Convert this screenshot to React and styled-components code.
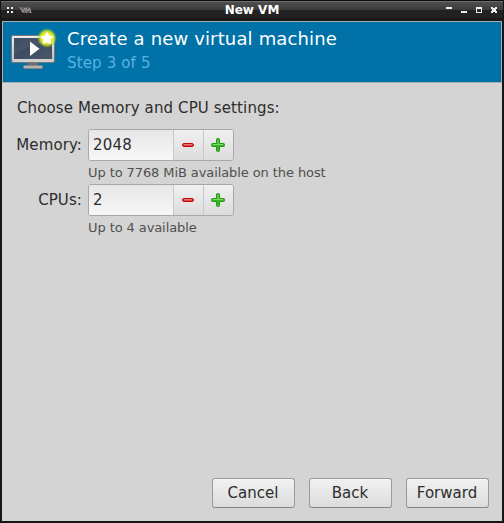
import React from "react";
import styled, { createGlobalStyle } from "styled-components";

const Global = createGlobalStyle`
  * { box-sizing: border-box; }
  body { margin: 0; background: #171516; }
`;

const Window = styled.div`
  width: 504px;
  height: 523px;
  display: flex;
  flex-direction: column;
  padding: 0 2px 2px;
  background: #171516;
  font-family: "DejaVu Sans", sans-serif;
  color: #2d2d2d;
  white-space: nowrap;
`;

const TitleBar = styled.header`
  height: 21px;
  flex: none;
  margin: 0 -2px;
  padding: 0 6px 0 6px;
  display: grid;
  grid-template-columns: 60px 1fr 60px;
  align-items: start;
  background: linear-gradient(
    to bottom,
    #0c0c0c 0 1px, #6d6b6d 1px 2px, #504f50 2px, #3c3c3c 10px,
    #222 10px 18px, #191819 18px 21px
  );
  border-left: 1px solid #171516;
  border-right: 1px solid #171516;
`;

const TitleIcon = styled.svg`
  display: block;
  height: 20px;
  width: ${(p) => p.$width}px;
  justify-self: ${(p) => p.$side};
`;

const Title = styled.h1`
  margin: 0;
  padding-top: 2px;
  text-align: center;
  font-size: 12px;
  line-height: 16px;
  font-weight: bold;
  color: #fff;
`;

const Banner = styled.section`
  height: 62px;
  flex: none;
  display: flex;
  background: #0072a8;
  border: 1px solid #a9adaf;
  padding: 5px 7px 7px 6px;
`;

const MachineIcon = styled.svg`
  width: 48px;
  height: 48px;
  flex: none;
`;

const BannerText = styled.div`
  margin-left: 10px;
`;

const Heading = styled.h2`
  margin: 0;
  font-size: 18px;
  line-height: 24px;
  font-weight: normal;
  letter-spacing: 0.15px;
  color: #fff;
`;

const Step = styled.p`
  margin: 0;
  font-size: 15px;
  line-height: 24px;
  letter-spacing: 0.15px;
  color: #59b2e0;
`;

const Body = styled.main`
  flex: 1;
  display: flex;
  flex-direction: column;
  background: #d4d4d4;
  padding: 15px 13px 13px 15px;
`;

const Intro = styled.p`
  margin: 0;
  font-size: 15px;
  line-height: 20px;
  letter-spacing: 0.12px;
`;

const Form = styled.div`
  display: grid;
  grid-template-columns: 65px max-content;
  grid-template-rows: 32px 23px 32px 23px;
  column-gap: 6px;
  margin-top: 11px;
`;

const Label = styled.label`
  justify-self: end;
  font-size: 15px;
  line-height: 32px;
  letter-spacing: 0.1px;
`;

const Hint = styled.p`
  grid-column: 2;
  margin: 0;
  font-size: 13px;
  line-height: 23px;
  letter-spacing: -0.09px;
  color: #505050;
`;

const Spin = styled.div`
  width: 146px;
  height: 32px;
  display: grid;
  grid-template-columns: 1fr 30px 30px;
  border: 1px solid #a8a8a8;
  border-radius: 3px;
  overflow: hidden;
`;

const Value = styled.span`
  padding-left: 4px;
  font-size: 15px;
  line-height: 30px;
  letter-spacing: 0.2px;
  background: linear-gradient(#e6e6e6, #f7f7f7);
`;

const StepButton = styled.button`
  display: flex;
  align-items: center;
  justify-content: center;
  padding: 0;
  border: 0;
  border-left: 1px solid #c9c9c9;
  background: linear-gradient(#f0f0f0, #dcdcdc);
`;

const Actions = styled.footer`
  display: flex;
  justify-content: flex-end;
  gap: 14px;
  margin-top: auto;
`;

const ActionButton = styled.button`
  width: 83px;
  height: 30px;
  padding: 0 1px 0 0;
  border: 1px solid #9a9a9a;
  border-bottom-color: #858585;
  border-radius: 3px;
  background: linear-gradient(#f1f1f1, #dcdcdc);
  box-shadow: inset 0 1px #f8f8f8;
  font: 15px/28px "DejaVu Sans", sans-serif;
  color: #2d2d2d;
`;

const Minus = () => (
  <svg width="15" height="16" viewBox="0 0 15 16">
    <rect x="1.500" y="6.500" width="11" height="3" rx="1.500" fill="#dc4545" stroke="#c40808" />
    <path d="M3 7.500h8" stroke="#e87575" />
  </svg>
);

const Plus = () => (
  <svg width="15" height="16" viewBox="0 0 15 16">
    <path d="M5.500 2.500q0-1 1-1h1q1 0 1 1V6.500h4q1 0 1 1v1q0 1-1 1h-4v4q0 1-1 1h-1q-1 0-1-1v-4h-4q-1 0-1-1v-1q0-1 1-1h4z" fill="#3cb428" stroke="#1f9c14" />
    <path d="M7 3v5M2 7.500h10" stroke="#7cdb60" />
  </svg>
);

const NewMachine = () => (
  <MachineIcon viewBox="0 0 48 48">
    <defs>
      <linearGradient id="frame" x2="0" y2="1">
        <stop stopColor="#eee" /><stop offset="1" stopColor="#bcbcbc" />
      </linearGradient>
      <linearGradient id="screen" x2="1" y2="1">
        <stop stopColor="#34425a" /><stop offset="1" stopColor="#4a586b" />
      </linearGradient>
      <radialGradient id="glow">
        <stop offset=".35" stopColor="#f2f53a" />
        <stop offset=".65" stopColor="#dfe81e" stopOpacity=".95" />
        <stop offset="1" stopColor="#a0cc20" stopOpacity="0" />
      </radialGradient>
    </defs>
    <path d="M19 35h10v4H19z" fill="#6e6e6e" />
    <rect x="14.500" y="38.500" width="19" height="3" rx="1" fill="#b4b4b4" stroke="#858585" />
    <rect x="2.500" y="8.500" width="43" height="27" rx="1.500" fill="url(#frame)" stroke="#777" />
    <path d="M4 32h40v3H4z" fill="#d0d0d0" />
    <path d="M5 11h38v21H5z" fill="url(#screen)" />
    <path d="M5 11h38v4Q20 17 5 28z" fill="#fff" opacity=".06" />
    <path d="M21 14.500l9.500 7.200L21 29z" fill="#fff" />
    <circle cx="38" cy="11" r="10" fill="url(#glow)" />
    <path d="M38 5.500l1.900 3.500 4 .7-2.800 2.900.6 4-3.700-1.800-3.700 1.800.6-4-2.800-2.900 4-.7z" fill="#fff" stroke="#fff" strokeLinejoin="round" />
  </MachineIcon>
);

const rows = [
  { label: "Memory:", value: "2048", hint: "Up to 7768 MiB available on the host" },
  { label: "CPUs:", value: "2", hint: "Up to 4 available" },
];

export default function App() {
  return (
    <>
      <Global />
      <Window>
        <TitleBar>
          <TitleIcon $width={26} $side="start" viewBox="0 0 26 20" shapeRendering="crispEdges">
            <path d="M0 7h2v2H0zM4 7h2v2H4zM0 11h2v2H0zM4 11h2v2H4z" fill="#eee" />
            <path d="M12 7h11l2 6H15z" fill="#5e5a5d" />
            <path d="M13 7.500l3.500 4.500 1-4M19 13V8l2 3 1.500-3 1.500 5" fill="none" stroke="#a39a9e" shapeRendering="auto" />
          </TitleIcon>
          <Title>New VM</Title>
          <TitleIcon $width={52} $side="end" viewBox="0 0 52 20" shapeRendering="crispEdges">
            <path d="M1 7h6v2H1zM16 11h6v2h-6zM31 7h6v6h-6zm1 2v3h4V9zM46 7h2v1h2V7h2v2h-1v2h1v2h-2v-1h-2v1h-2v-2h1V9h-1z" fill="#eee" fillRule="evenodd" />
          </TitleIcon>
        </TitleBar>
        <Banner>
          <NewMachine />
          <BannerText>
            <Heading>Create a new virtual machine</Heading>
            <Step>Step 3 of 5</Step>
          </BannerText>
        </Banner>
        <Body>
          <Intro>Choose Memory and CPU settings:</Intro>
          <Form>
            {rows.map((r) => (
              <React.Fragment key={r.label}>
                <Label>{r.label}</Label>
                <Spin>
                  <Value>{r.value}</Value>
                  <StepButton aria-label="Decrease"><Minus /></StepButton>
                  <StepButton aria-label="Increase"><Plus /></StepButton>
                </Spin>
                <Hint>{r.hint}</Hint>
              </React.Fragment>
            ))}
          </Form>
          <Actions>
            <ActionButton>Cancel</ActionButton>
            <ActionButton>Back</ActionButton>
            <ActionButton>Forward</ActionButton>
          </Actions>
        </Body>
      </Window>
    </>
  );
}
